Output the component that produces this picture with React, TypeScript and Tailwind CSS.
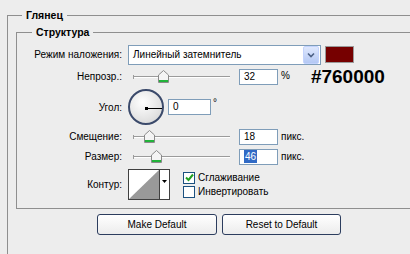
import React from 'react';

// Ползунок с «домиком» в стиле Photoshop
const Slider = ({ pos }: { pos: number }) => (
  <div className="relative w-[104px] h-[16px] shrink-0">
    <div className="absolute left-[5px] top-[7px] w-[97px] h-[2px] border-t border-[#9b9b9b] border-b border-b-white" />
    <div className="absolute left-[5px] top-[6px] w-px h-[4px] bg-[#9b9b9b]" />
    <svg
      className="absolute top-[1px]"
      style={{ left: pos - 128 - 5 }}
      width="11"
      height="13"
      viewBox="0 0 11 13"
    >
      <polygon points="0.5,5 5.5,0.5 10.5,5 10.5,12.5 0.5,12.5" fill="#f4f4f4" stroke="#8a8a8a" />
      <rect x="1" y="10" width="9" height="2" fill="#22b33a" />
    </svg>
  </div>
);

const NumBox = ({ value, selected, w = 39 }: { value: string; selected?: boolean; w?: number }) => (
  <div
    className="h-[16px] shrink-0 border border-[#7f9db9] bg-white pl-[4px] flex items-center text-[10px] leading-none"
    style={{ width: w }}
  >
    {selected ? <span className="bg-[#316ac5] text-white px-px leading-[13px]">{value}</span> : value}
  </div>
);

const Label = ({ children }: { children: React.ReactNode }) => (
  <div className="w-[106px] shrink-0 text-right pr-px">{children}</div>
);

const Checkbox = ({ checked, label }: { checked?: boolean; label: string }) => (
  <div className="flex items-center h-[14px]">
    <div className="w-[12px] h-[12px] border border-[#1c5180] bg-white flex items-center justify-center">
      {checked && (
        <svg width="9" height="9" viewBox="0 0 9 9">
          <path d="M1 4.5 L3.5 7 L8 1.5" fill="none" stroke="#21a121" strokeWidth="2" />
        </svg>
      )}
    </div>
    <span className="ml-[3px]">{label}</span>
  </div>
);

export default function App() {
  return (
    <div className="w-[410px] h-[254px] overflow-hidden bg-[#ededed] pt-[8px] font-['Liberation_Sans',Arial,sans-serif] text-[10px] text-black">
      <fieldset className="ml-[7px] w-[440px] min-h-[270px] border border-[#8f8f8f] pl-[8px]">
        <legend className="ml-[6px] px-[4px] font-bold text-[10.5px] leading-[14px]">Глянец</legend>

        <fieldset className="mt-[3px] w-[420px] border border-[#8f8f8f]">
          <legend className="ml-[15px] px-[4px] font-bold text-[10.5px] leading-[14px]">Структура</legend>

          <div className="pt-[5px] pb-[5px]">
            {/* Режим наложения */}
            <div className="flex items-center h-[21px]">
              <Label>Режим наложения:</Label>
              <div className="ml-[5px] w-[193px] h-[20px] border border-[#7f9db9] bg-white flex items-center">
                <span className="flex-1 pl-[4px]">Линейный затемнитель</span>
                <div className="w-[16px] h-[18px] mr-px rounded-[2px] bg-gradient-to-b from-[#dfe8fd] to-[#b4c8f4] border border-[#c3d3fd] flex items-center justify-center">
                  <svg width="8" height="6" viewBox="0 0 8 6">
                    <path d="M1 1.5 L4 4.5 L7 1.5" fill="none" stroke="#4d6185" strokeWidth="1.6" />
                  </svg>
                </div>
              </div>
              <div className="ml-[4px] w-[29px] h-[17px] bg-[#760000] border border-[#9a9a9a]" />
            </div>

            {/* Непрозрачность */}
            <div className="flex items-center h-[23px]">
              <Label>Непрозр.:</Label>
              <div className="ml-[5px]" />
              <Slider pos={163} />
              <div className="ml-[7px]" />
              <NumBox value="32" />
              <span className="ml-[3px] self-start mt-[3px]">%</span>
              <span className="ml-[21px] font-bold text-[19px] leading-none">#760000</span>
            </div>

            {/* Угол */}
            <div className="flex items-center h-[38px]">
              <Label>Угол:</Label>
              <div className="ml-[5px] relative w-[36px] h-[36px] rounded-full border-2 border-[#3b4a6b] bg-[radial-gradient(circle_at_40%_35%,#ffffff,#e4e4e4_60%,#cfcfcf)]">
                <div className="absolute left-[15px] top-[16px] w-[3px] h-[3px] bg-black" />
                <div className="absolute left-[16px] top-[16.5px] w-[16px] h-[1.5px] bg-black" />
              </div>
              <div className="ml-[4px]" />
              <NumBox value="0" w={43} />
              <span className="ml-[2px] self-start mt-[10px] leading-none">°</span>
            </div>

            {/* Смещение */}
            <div className="flex items-center h-[21px]">
              <Label>Смещение:</Label>
              <div className="ml-[5px]" />
              <Slider pos={149} />
              <div className="ml-[7px]" />
              <NumBox value="18" />
              <span className="ml-[3px]">пикс.</span>
            </div>

            {/* Размер */}
            <div className="flex items-center h-[19px]">
              <Label>Размер:</Label>
              <div className="ml-[5px]" />
              <Slider pos={156} />
              <div className="ml-[7px]" />
              <NumBox value="46" selected />
              <span className="ml-[3px]">пикс.</span>
            </div>

            {/* Контур */}
            <div className="flex items-center h-[37px]">
              <Label>Контур:</Label>
              <div className="ml-[5px] w-[42px] h-[31px] border border-[#404040] bg-white flex">
                <svg width="30" height="29" viewBox="0 0 30 29" className="shrink-0">
                  <polygon points="0,29 30,0 30,29" fill="#999999" />
                </svg>
                <div className="flex-1 border-l border-[#404040] flex items-start justify-center pt-[10px]">
                  <svg width="5" height="3" viewBox="0 0 5 3">
                    <polygon points="0,0 5,0 2.5,3" fill="#000" />
                  </svg>
                </div>
              </div>
              <div className="ml-[13px] flex flex-col">
                <Checkbox checked label="Сглаживание" />
                <Checkbox label="Инвертировать" />
              </div>
            </div>
          </div>
        </fieldset>

        <div className="flex gap-[5px] ml-[81px] mt-[5px]">
          <button className="w-[120px] h-[21px] rounded-[3px] border border-[#2c3d5e] bg-gradient-to-b from-white to-[#ececec] text-[10px]">
            Make Default
          </button>
          <button className="w-[119px] h-[21px] rounded-[3px] border border-[#2c3d5e] bg-gradient-to-b from-white to-[#ececec] text-[10px]">
            Reset to Default
          </button>
        </div>
      </fieldset>
    </div>
  );
}
